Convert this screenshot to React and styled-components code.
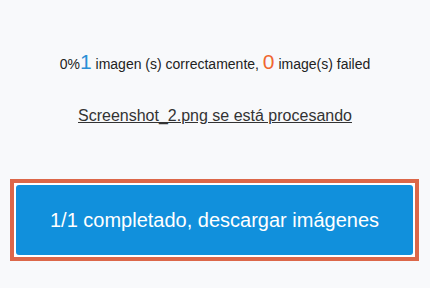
import React from "react";
import styled, { createGlobalStyle } from "styled-components";

const Global = createGlobalStyle`
  html, body { margin: 0; padding: 0; background: #f8f9fb; }
  body { font-family: "Liberation Sans", Arial, sans-serif; }
`;

const Page = styled.div`
  width: 430px;
  height: 288px;
  display: flex;
  flex-direction: column;
  align-items: stretch;
  padding-top: 50px;
  box-sizing: border-box;
`;

const Status = styled.div`
  text-align: center;
  font-size: 14px;
  color: #222;
  line-height: 24px;
  height: 24px;
`;

const Count = styled.span`
  font-size: 21px;
  color: ${(p) => p.$color};
`;

const FileLine = styled.div`
  margin-top: 32px;
  text-align: center;
  font-size: 16px;
  color: #333;
  text-decoration: underline;
  line-height: 20px;
`;

const Frame = styled.div`
  margin: 53px 11px 0 10px;
  border: 4px solid #dc6749;
  padding: 2px;
  background: #fff;
`;

const Button = styled.button`
  display: block;
  width: 100%;
  height: 70px;
  border: none;
  border-radius: 3px;
  background: #1190dc;
  color: #fff;
  font-family: "Liberation Sans", Arial, sans-serif;
  font-size: 20px;
  cursor: pointer;
`;

export default function App() {
  return (
    <>
      <Global />
      <Page>
        <Status>
          0%<Count $color="#2a8fd6">1</Count> imagen (s) correctamente,{" "}
          <Count $color="#f0662f">0</Count> image(s) failed
        </Status>
        <FileLine>Screenshot_2.png se está procesando</FileLine>
        <Frame>
          <Button>1/1 completado, descargar imágenes</Button>
        </Frame>
      </Page>
    </>
  );
}
